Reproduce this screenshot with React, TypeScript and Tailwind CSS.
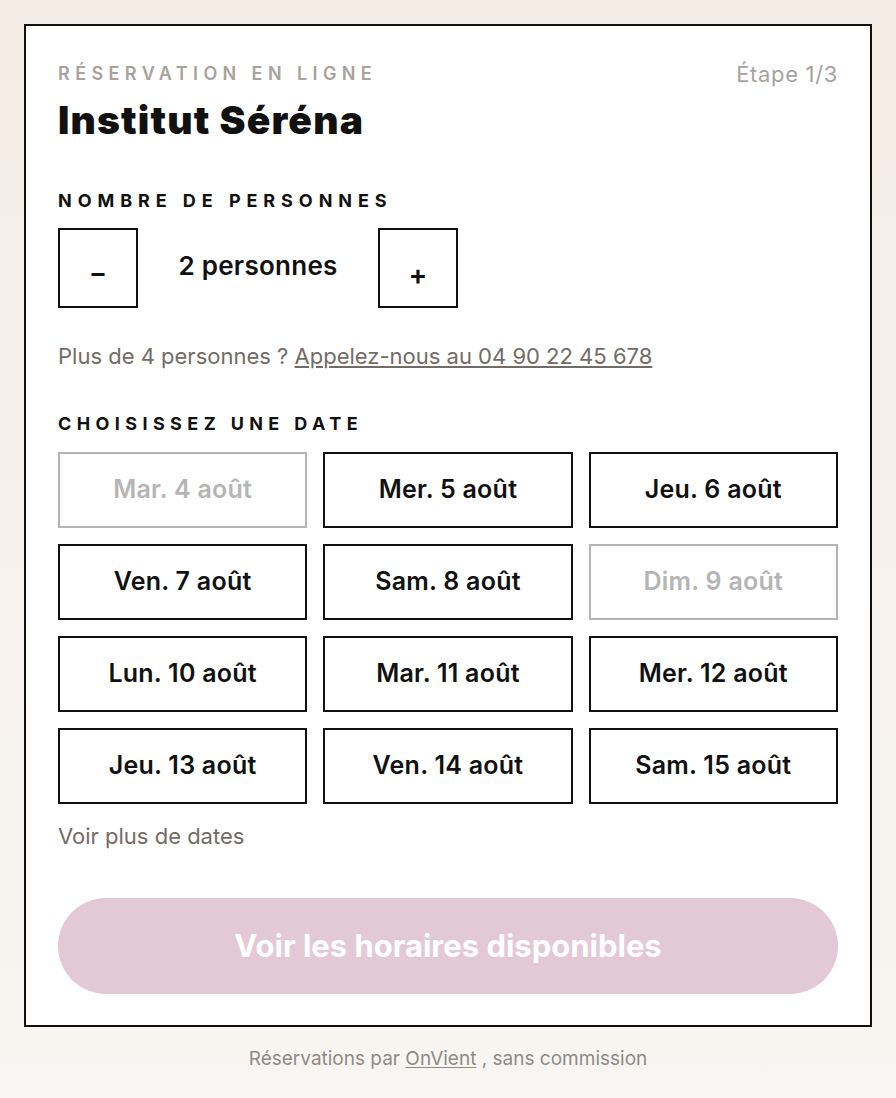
import { useState } from 'react';

const dates = [
    { label: 'Mar. 4 août', disabled: true },
    { label: 'Mer. 5 août' },
    { label: 'Jeu. 6 août' },
    { label: 'Ven. 7 août' },
    { label: 'Sam. 8 août' },
    { label: 'Dim. 9 août', disabled: true },
    { label: 'Lun. 10 août' },
    { label: 'Mar. 11 août' },
    { label: 'Mer. 12 août' },
    { label: 'Jeu. 13 août' },
    { label: 'Ven. 14 août' },
    { label: 'Sam. 15 août' },
];

export default function App() {
    const [count, setCount] = useState(2);

    return (
        <div className="min-h-[1098px] bg-gradient-to-b from-[#f5ece5] to-[#f8f6f2] px-6 pt-6 font-['Inter',sans-serif]">
            <div className="border-2 border-[#111] bg-white px-8 pt-9 pb-[31px]">
                <header className="flex items-start justify-between">
                    <div>
                        <p className="text-[18px] leading-6 font-semibold tracking-[0.3em] text-[#a8a29d]">RÉSERVATION EN LIGNE</p>
                        <h1 className="mt-[14px] text-[39px] leading-10 font-black tracking-[0.03em] text-[#111]">Institut Séréna</h1>
                    </div>
                    <span className="text-[22px] leading-6 tracking-[0.03em] text-[#a8a29d]">Étape 1/3</span>
                </header>

                <section className="mt-[49px]">
                    <h2 className="text-[18px] leading-6 font-bold tracking-[0.33em] text-[#111]">NOMBRE DE PERSONNES</h2>
                    <div className="mt-[15px] flex items-center">
                        <button
                            onClick={() => setCount(c => Math.max(1, c - 1))}
                            className="flex h-20 w-20 items-end justify-center border-2 border-[#111] pb-[20px] text-[26px] leading-none font-bold text-[#111]"
                        >
                            –
                        </button>
                        <span className="w-60 text-center text-[26px] leading-8 font-semibold tracking-[0.01em] text-[#111] -mt-1">{count} personnes</span>
                        <button
                            onClick={() => setCount(c => Math.min(4, c + 1))}
                            className="flex h-20 w-20 items-end justify-center border-2 border-[#111] pb-[17px] text-[28px] leading-none font-semibold text-[#111]"
                        >
                            +
                        </button>
                    </div>
                    <p className="mt-[34px] text-[22px] leading-7 text-[#736c66]">
                        Plus de 4 personnes ? <a href="#" className="underline underline-offset-2">Appelez-nous au 04 90 22 45 678</a>
                    </p>
                </section>

                <section className="mt-[42px]">
                    <h2 className="text-[18px] leading-6 font-bold tracking-[0.3em] text-[#111]">CHOISISSEZ UNE DATE</h2>
                    <div className="mt-4 grid grid-cols-3 gap-4">
                        {dates.map(d => (
                            <button
                                key={d.label}
                                disabled={d.disabled}
                                className={
                                    d.disabled
                                        ? 'h-[76px] border-2 border-[#b5b5b5] text-[25px] font-semibold tracking-[0.01em] text-[#b5b5b5]'
                                        : 'h-[76px] border-2 border-[#111] text-[25px] font-semibold tracking-[0.01em] text-[#111]'
                                }
                            >
                                {d.label}
                            </button>
                        ))}
                    </div>
                    <p className="mt-[18px] text-[22px] leading-7 text-[#736c66]">Voir plus de dates</p>
                </section>

                <button disabled className="mt-12 h-24 w-full rounded-full bg-[#e3c9d6] text-[31px] font-bold text-white">
                    Voir les horaires disponibles
                </button>
            </div>

            <p className="mt-5 text-center text-[19px] leading-6 text-[#8f8a85]">
                Réservations par <a href="#" className="underline underline-offset-2">OnVient</a> , sans commission
            </p>
        </div>
    );
}
